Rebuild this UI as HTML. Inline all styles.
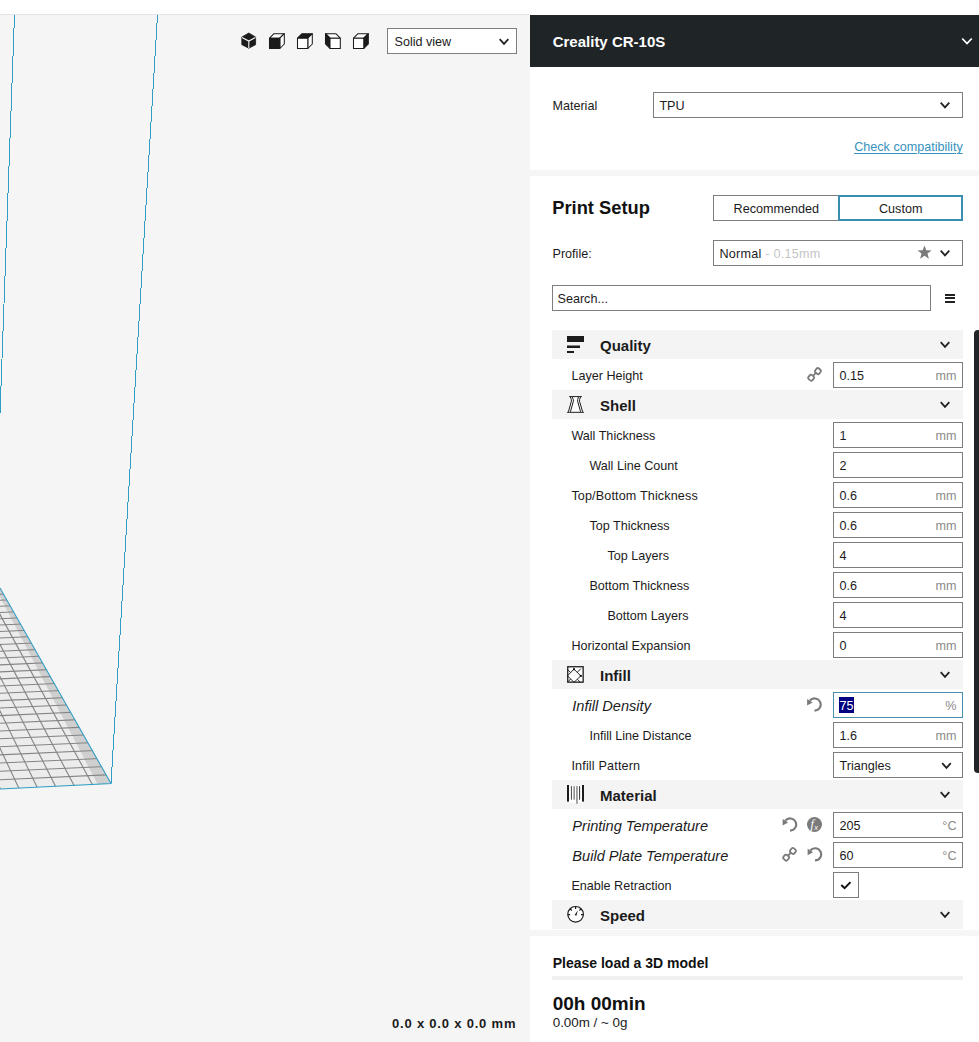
<!DOCTYPE html>
<html><head><meta charset="utf-8">
<style>
*{margin:0;padding:0;box-sizing:border-box}
html,body{width:979px;height:1042px;overflow:hidden;background:#fff}
body{position:relative;font-family:"Liberation Sans",sans-serif;color:#1b1b1b}
.a{position:absolute;display:block;overflow:visible}
.t{position:absolute;white-space:nowrap;line-height:normal}
</style></head><body>
<div class="a" style="left:0px;top:0px;width:979px;height:15px;background:#fff"></div>
<div class="a" style="left:0px;top:14px;width:530px;height:1px;background:#e4e4e4"></div>
<div class="a" style="left:0px;top:15px;width:530px;height:1027px;background:#f5f5f5"></div>
<div class="a" style="left:530px;top:15px;width:449px;height:1027px;background:#f6f6f6"></div>
<div class="a" style="left:530px;top:67px;width:449px;height:103px;background:#fff"></div>
<div class="a" style="left:530px;top:176px;width:449px;height:754px;background:#fff"></div>
<div class="a" style="left:530px;top:936px;width:449px;height:106px;background:#fff"></div>
<svg class="a" style="left:0;top:15px" width="530" height="1027" viewBox="0 15 530 1027"><defs><clipPath id="pc"><polygon points="0,588 111,783.5 0,789"/></clipPath></defs><polygon points="0,588 111,783.5 0,789" fill="#ececec"/><g clip-path="url(#pc)"><polygon points="0,588 111,783.5 97.5,784.2 -3.5,590" fill="#cfcfcf"/><line x1="0" y1="594.20" x2="120" y2="588.70" stroke="#848484" stroke-width="1.1"/><line x1="0" y1="600.20" x2="120" y2="594.70" stroke="#848484" stroke-width="1.1"/><line x1="0" y1="606.29" x2="120" y2="600.79" stroke="#848484" stroke-width="1.1"/><line x1="0" y1="612.45" x2="120" y2="606.95" stroke="#848484" stroke-width="1.1"/><line x1="0" y1="618.70" x2="120" y2="613.20" stroke="#848484" stroke-width="1.1"/><line x1="0" y1="625.03" x2="120" y2="619.53" stroke="#848484" stroke-width="1.1"/><line x1="0" y1="631.45" x2="120" y2="625.95" stroke="#848484" stroke-width="1.1"/><line x1="0" y1="637.96" x2="120" y2="632.46" stroke="#848484" stroke-width="1.1"/><line x1="0" y1="644.55" x2="120" y2="639.05" stroke="#848484" stroke-width="1.1"/><line x1="0" y1="651.24" x2="120" y2="645.74" stroke="#848484" stroke-width="1.1"/><line x1="0" y1="658.01" x2="120" y2="652.51" stroke="#848484" stroke-width="1.1"/><line x1="0" y1="664.87" x2="120" y2="659.37" stroke="#848484" stroke-width="1.1"/><line x1="0" y1="671.83" x2="120" y2="666.33" stroke="#848484" stroke-width="1.1"/><line x1="0" y1="678.88" x2="120" y2="673.38" stroke="#848484" stroke-width="1.1"/><line x1="0" y1="686.03" x2="120" y2="680.53" stroke="#848484" stroke-width="1.1"/><line x1="0" y1="693.27" x2="120" y2="687.77" stroke="#848484" stroke-width="1.1"/><line x1="0" y1="700.61" x2="120" y2="695.11" stroke="#848484" stroke-width="1.1"/><line x1="0" y1="708.05" x2="120" y2="702.55" stroke="#848484" stroke-width="1.1"/><line x1="0" y1="715.59" x2="120" y2="710.09" stroke="#848484" stroke-width="1.1"/><line x1="0" y1="723.23" x2="120" y2="717.73" stroke="#848484" stroke-width="1.1"/><line x1="0" y1="730.97" x2="120" y2="725.47" stroke="#848484" stroke-width="1.1"/><line x1="0" y1="738.82" x2="120" y2="733.32" stroke="#848484" stroke-width="1.1"/><line x1="0" y1="746.78" x2="120" y2="741.28" stroke="#848484" stroke-width="1.1"/><line x1="0" y1="754.84" x2="120" y2="749.34" stroke="#848484" stroke-width="1.1"/><line x1="0" y1="763.01" x2="120" y2="757.51" stroke="#848484" stroke-width="1.1"/><line x1="0" y1="771.29" x2="120" y2="765.79" stroke="#848484" stroke-width="1.1"/><line x1="0" y1="779.69" x2="120" y2="774.19" stroke="#848484" stroke-width="1.1"/><line x1="92.60" y1="784.92" x2="-467.0" y2="-245.0" stroke="#848484" stroke-width="1.1"/><line x1="74.20" y1="785.83" x2="-467.0" y2="-245.0" stroke="#848484" stroke-width="1.1"/><line x1="55.80" y1="786.75" x2="-467.0" y2="-245.0" stroke="#848484" stroke-width="1.1"/><line x1="37.40" y1="787.67" x2="-467.0" y2="-245.0" stroke="#848484" stroke-width="1.1"/><line x1="19.00" y1="788.58" x2="-467.0" y2="-245.0" stroke="#848484" stroke-width="1.1"/><line x1="0.60" y1="789.50" x2="-467.0" y2="-245.0" stroke="#848484" stroke-width="1.1"/><line x1="-17.80" y1="790.42" x2="-467.0" y2="-245.0" stroke="#848484" stroke-width="1.1"/></g><polyline points="0,588 111,783.5 0,789" fill="none" stroke="#2f9dc4" stroke-width="1.1"/><line x1="14.5" y1="15" x2="0" y2="414" stroke="#2f9dc4" stroke-width="1" shape-rendering="crispEdges"/><line x1="157.5" y1="15" x2="111" y2="783.5" stroke="#2f9dc4" stroke-width="1" shape-rendering="crispEdges"/></svg>
<svg class="a" style="left:240px;top:32px" width="18" height="18" viewBox="0 0 18 18"><path d="M8.8 1 L15.6 5.1 V12.7 L8.8 16.2 L1.8 12.7 V5.1 Z" fill="#1b1b1b" stroke="#1b1b1b" stroke-width="0.8" stroke-linejoin="round"/><path d="M2 5.4 L8.8 9.1 L15.4 5.4 M8.8 9.1 V16" stroke="#f5f5f5" stroke-width="1.1" fill="none"/></svg>
<svg class="a" style="left:268px;top:32px" width="18" height="18" viewBox="0 0 18 18"><g stroke="#1b1b1b" stroke-width="1.05" stroke-linejoin="round"><path d="M1.5 6.2 L6.0 1.7000000000000002 H16.3 L11.8 6.2 Z" fill="#fff"/><path d="M11.8 6.2 L16.3 1.7000000000000002 V12.0 L11.8 16.5 Z" fill="#fff"/><path d="M1.5 6.2 h10.3 v10.3 h-10.3 Z" fill="#1b1b1b"/></g></svg>
<svg class="a" style="left:296px;top:32px" width="18" height="18" viewBox="0 0 18 18"><g stroke="#1b1b1b" stroke-width="1.05" stroke-linejoin="round"><path d="M1.5 6.2 L6.0 1.7000000000000002 H16.3 L11.8 6.2 Z" fill="#1b1b1b"/><path d="M11.8 6.2 L16.3 1.7000000000000002 V12.0 L11.8 16.5 Z" fill="#fff"/><path d="M1.5 6.2 h10.3 v10.3 h-10.3 Z" fill="#fff"/></g></svg>
<svg class="a" style="left:324px;top:32px" width="18" height="18" viewBox="0 0 18 18"><g stroke="#1b1b1b" stroke-width="1.05" stroke-linejoin="round"><path d="M6.0 6.2 L1.5 1.7000000000000002 H11.8 L16.3 6.2 Z" fill="#fff"/><path d="M6.0 6.2 L1.5 1.7000000000000002 V12.0 L6.0 16.5 Z" fill="#1b1b1b"/><path d="M6.0 6.2 h10.3 v10.3 h-10.3 Z" fill="#fff"/></g></svg>
<svg class="a" style="left:352px;top:32px" width="18" height="18" viewBox="0 0 18 18"><g stroke="#1b1b1b" stroke-width="1.05" stroke-linejoin="round"><path d="M1.5 6.2 L6.0 1.7000000000000002 H16.3 L11.8 6.2 Z" fill="#fff"/><path d="M11.8 6.2 L16.3 1.7000000000000002 V12.0 L11.8 16.5 Z" fill="#1b1b1b"/><path d="M1.5 6.2 h10.3 v10.3 h-10.3 Z" fill="#fff"/></g></svg>
<div class="a" style="left:387px;top:28px;width:130px;height:26px;background:#fff;border:1px solid #7d7d7d"></div>
<div class="t" style="left:394.5px;top:34.80px;font-size:12.6px;font-weight:normal;font-style:normal;color:#1b1b1b;">Solid view</div>
<svg class="a" style="left:497px;top:37px" width="13.6" height="9.8" viewBox="0 0 13.6 9.8"><polyline points="2.70,2.10 7.00,6.90 11.30,2.10" fill="none" stroke="#222" stroke-width="1.75"/></svg>
<div class="t" style="left:392px;top:1016.24px;font-size:13px;font-weight:bold;font-style:normal;color:#1b1b1b;letter-spacing:0.8px">0.0 x 0.0 x 0.0 mm</div>
<div class="a" style="left:530px;top:15px;width:449px;height:52px;background:#1f2427"></div>
<div class="t" style="left:552.7px;top:33.42px;font-size:15px;font-weight:bold;font-style:normal;color:#fff;">Creality CR-10S</div>
<svg class="a" style="left:960px;top:36px" width="14.5" height="10" viewBox="0 0 14.5 10"><polyline points="2.25,2.50 7.00,7.50 11.75,2.50" fill="none" stroke="#fff" stroke-width="1.8"/></svg>
<div class="t" style="left:552.4px;top:98.60px;font-size:12.6px;font-weight:normal;font-style:normal;color:#1b1b1b;">Material</div>
<div class="a" style="left:653px;top:92px;width:310px;height:26px;background:#fff;border:1px solid #7d7d7d"></div>
<div class="t" style="left:659.4px;top:98.60px;font-size:12.6px;font-weight:normal;font-style:normal;color:#1b1b1b;">TPU</div>
<svg class="a" style="left:938px;top:100px" width="13.6" height="9.8" viewBox="0 0 13.6 9.8"><polyline points="2.70,2.60 7.00,7.40 11.30,2.60" fill="none" stroke="#222" stroke-width="1.75"/></svg>
<div class="t" style="left:854.2px;top:140.00px;font-size:12.6px;font-weight:normal;font-style:normal;color:#3592bd;text-decoration:underline;text-underline-offset:1.5px">Check compatibility</div>
<div class="t" style="left:552.3px;top:197.44px;font-size:18.3px;font-weight:bold;font-style:normal;color:#111;">Print Setup</div>
<div class="a" style="left:713px;top:195px;width:126px;height:26px;background:#fff;border:1px solid #7d7d7d"></div>
<div class="a" style="left:838px;top:195px;width:125px;height:26px;background:#fff;border:2px solid #3b8db0"></div>
<div class="t" style="left:733.6px;top:201.60px;font-size:12.6px;font-weight:normal;font-style:normal;color:#1b1b1b;">Recommended</div>
<div class="t" style="left:879px;top:201.60px;font-size:12.6px;font-weight:normal;font-style:normal;color:#1b1b1b;">Custom</div>
<div class="t" style="left:552.5px;top:246.90px;font-size:12.6px;font-weight:normal;font-style:normal;color:#1b1b1b;">Profile:</div>
<div class="a" style="left:713px;top:240px;width:250px;height:26px;background:#fff;border:1px solid #7d7d7d"></div>
<div class="t" style="left:719.5px;top:246.80px;font-size:12.6px;font-weight:normal;font-style:normal;color:#1b1b1b;letter-spacing:0.25px">Normal<span style="color:#c4c4c4"> - 0.15mm</span></div>
<svg class="a" style="left:917px;top:245px" width="16" height="15" viewBox="0 0 16 15"><path d="M7.5 0.4 L9.3 5.2 L14.6 5.4 L10.5 8.6 L11.9 13.8 L7.5 10.8 L3.1 13.8 L4.5 8.6 L0.4 5.4 L5.7 5.2 Z" fill="#7b7b7b"/></svg>
<svg class="a" style="left:938px;top:248px" width="13.6" height="9.8" viewBox="0 0 13.6 9.8"><polyline points="2.70,2.60 7.00,7.40 11.30,2.60" fill="none" stroke="#222" stroke-width="1.75"/></svg>
<div class="a" style="left:552px;top:285px;width:379px;height:26px;background:#fff;border:1px solid #7d7d7d"></div>
<div class="t" style="left:557.5px;top:291.60px;font-size:12.6px;font-weight:normal;font-style:normal;color:#1b1b1b;">Search...</div>
<div class="a" style="left:945px;top:293.5px;width:10px;height:2px;background:#222"></div>
<div class="a" style="left:945px;top:297px;width:10px;height:2px;background:#222"></div>
<div class="a" style="left:945px;top:300.5px;width:10px;height:2px;background:#222"></div>
<div class="a" style="left:552px;top:330px;width:411px;height:29px;background:#f4f4f4"></div>
<div class="t" style="left:600px;top:337.43px;font-size:15px;font-weight:bold;font-style:normal;color:#1b1b1b;">Quality</div>
<svg class="a" style="left:938px;top:340px" width="13.6" height="9.8" viewBox="0 0 13.6 9.8"><polyline points="2.70,2.10 7.00,6.90 11.30,2.10" fill="none" stroke="#222" stroke-width="1.75"/></svg>
<svg class="a" style="left:567px;top:336px" width="17" height="18" viewBox="0 0 17 18"><rect x="0" y="0" width="17" height="6" fill="#1b1b1b"/><rect x="0" y="9.5" width="13" height="2.5" fill="#1b1b1b"/><rect x="0" y="15" width="7" height="2" fill="#1b1b1b"/></svg>
<div class="t" style="left:571.4px;top:369.10px;font-size:12.6px;font-weight:normal;font-style:normal;color:#1b1b1b;">Layer Height</div>
<div class="a" style="left:833px;top:362px;width:130px;height:26px;background:#fff;border:1px solid #7d7d7d"></div>
<div class="t" style="left:839.5px;top:369.10px;font-size:12.6px;font-weight:normal;font-style:normal;color:#1b1b1b;">0.15</div>
<div class="t" style="right:22.5px;top:369.10px;font-size:12.6px;color:#8a8a8a">mm</div>
<svg class="a" style="left:806px;top:366px" width="16" height="16" viewBox="0 0 16 16"><g transform="translate(0.47 0.37)"><g fill="none" stroke="#7a7a7a" stroke-width="1.8"><rect x="2.08" y="8.78" width="5.2" height="5.2" rx="1.6" transform="rotate(40 4.68 11.38)"/><rect x="8.88" y="2.17" width="5.2" height="5.2" rx="1.6" transform="rotate(40 11.48 4.77)"/><path d="M6.1 9.9 L9.6 6.2"/></g></g></svg>
<div class="a" style="left:552px;top:390px;width:411px;height:29px;background:#f4f4f4"></div>
<div class="t" style="left:600px;top:397.43px;font-size:15px;font-weight:bold;font-style:normal;color:#1b1b1b;">Shell</div>
<svg class="a" style="left:938px;top:400px" width="13.6" height="9.8" viewBox="0 0 13.6 9.8"><polyline points="2.70,2.10 7.00,6.90 11.30,2.10" fill="none" stroke="#222" stroke-width="1.75"/></svg>
<svg class="a" style="left:567px;top:396px" width="17" height="18" viewBox="0 0 17 18"><path d="M3.2 1 H13.8 Q12 4 12.4 5.5 L15.8 16 H1.2 L4.6 5.5 Q5 4 3.2 1 Z" fill="#fff"/><g fill="none" stroke="#1b1b1b" stroke-width="1"><path d="M2.2 0.6 H14.8 M0.1 16.3 H16.9"/><path d="M3.4 1 Q4.7 3.6 4.4 5.2 L1.4 15.8 M5.3 1 Q6.6 3.6 6.4 5.2 L3.4 15.8 M13.5 1 Q12.3 3.6 12.5 5.2 L15.6 15.8 M11.5 1 Q10.4 3.6 10.6 5.2 L13.6 15.8"/></g></svg>
<div class="t" style="left:571.4px;top:429.10px;font-size:12.6px;font-weight:normal;font-style:normal;color:#1b1b1b;">Wall Thickness</div>
<div class="a" style="left:833px;top:422px;width:130px;height:26px;background:#fff;border:1px solid #7d7d7d"></div>
<div class="t" style="left:839.5px;top:429.10px;font-size:12.6px;font-weight:normal;font-style:normal;color:#1b1b1b;">1</div>
<div class="t" style="right:22.5px;top:429.10px;font-size:12.6px;color:#8a8a8a">mm</div>
<div class="t" style="left:589.4px;top:459.10px;font-size:12.6px;font-weight:normal;font-style:normal;color:#1b1b1b;">Wall Line Count</div>
<div class="a" style="left:833px;top:452px;width:130px;height:26px;background:#fff;border:1px solid #7d7d7d"></div>
<div class="t" style="left:839.5px;top:459.10px;font-size:12.6px;font-weight:normal;font-style:normal;color:#1b1b1b;">2</div>
<div class="t" style="left:571.4px;top:489.10px;font-size:12.6px;font-weight:normal;font-style:normal;color:#1b1b1b;letter-spacing:0.14px">Top/Bottom Thickness</div>
<div class="a" style="left:833px;top:482px;width:130px;height:26px;background:#fff;border:1px solid #7d7d7d"></div>
<div class="t" style="left:839.5px;top:489.10px;font-size:12.6px;font-weight:normal;font-style:normal;color:#1b1b1b;">0.6</div>
<div class="t" style="right:22.5px;top:489.10px;font-size:12.6px;color:#8a8a8a">mm</div>
<div class="t" style="left:589.4px;top:519.10px;font-size:12.6px;font-weight:normal;font-style:normal;color:#1b1b1b;">Top Thickness</div>
<div class="a" style="left:833px;top:512px;width:130px;height:26px;background:#fff;border:1px solid #7d7d7d"></div>
<div class="t" style="left:839.5px;top:519.10px;font-size:12.6px;font-weight:normal;font-style:normal;color:#1b1b1b;">0.6</div>
<div class="t" style="right:22.5px;top:519.10px;font-size:12.6px;color:#8a8a8a">mm</div>
<div class="t" style="left:607.4px;top:549.10px;font-size:12.6px;font-weight:normal;font-style:normal;color:#1b1b1b;">Top Layers</div>
<div class="a" style="left:833px;top:542px;width:130px;height:26px;background:#fff;border:1px solid #7d7d7d"></div>
<div class="t" style="left:839.5px;top:549.10px;font-size:12.6px;font-weight:normal;font-style:normal;color:#1b1b1b;">4</div>
<div class="t" style="left:589.4px;top:579.10px;font-size:12.6px;font-weight:normal;font-style:normal;color:#1b1b1b;">Bottom Thickness</div>
<div class="a" style="left:833px;top:572px;width:130px;height:26px;background:#fff;border:1px solid #7d7d7d"></div>
<div class="t" style="left:839.5px;top:579.10px;font-size:12.6px;font-weight:normal;font-style:normal;color:#1b1b1b;">0.6</div>
<div class="t" style="right:22.5px;top:579.10px;font-size:12.6px;color:#8a8a8a">mm</div>
<div class="t" style="left:607.4px;top:609.10px;font-size:12.6px;font-weight:normal;font-style:normal;color:#1b1b1b;">Bottom Layers</div>
<div class="a" style="left:833px;top:602px;width:130px;height:26px;background:#fff;border:1px solid #7d7d7d"></div>
<div class="t" style="left:839.5px;top:609.10px;font-size:12.6px;font-weight:normal;font-style:normal;color:#1b1b1b;">4</div>
<div class="t" style="left:571.4px;top:639.10px;font-size:12.6px;font-weight:normal;font-style:normal;color:#1b1b1b;">Horizontal Expansion</div>
<div class="a" style="left:833px;top:632px;width:130px;height:26px;background:#fff;border:1px solid #7d7d7d"></div>
<div class="t" style="left:839.5px;top:639.10px;font-size:12.6px;font-weight:normal;font-style:normal;color:#1b1b1b;">0</div>
<div class="t" style="right:22.5px;top:639.10px;font-size:12.6px;color:#8a8a8a">mm</div>
<div class="a" style="left:552px;top:660px;width:411px;height:29px;background:#f4f4f4"></div>
<div class="t" style="left:600px;top:667.42px;font-size:15px;font-weight:bold;font-style:normal;color:#1b1b1b;">Infill</div>
<svg class="a" style="left:938px;top:670px" width="13.6" height="9.8" viewBox="0 0 13.6 9.8"><polyline points="2.70,2.10 7.00,6.90 11.30,2.10" fill="none" stroke="#222" stroke-width="1.75"/></svg>
<svg class="a" style="left:567px;top:666px" width="17" height="18" viewBox="0 0 17 18"><rect x="0.75" y="0.75" width="15.4" height="15.4" fill="#fff" stroke="#1b1b1b" stroke-width="1.3"/><g stroke="#1b1b1b" stroke-width="0.95" fill="none"><polygon points="7,3.15 13.8,9.9 7,16.35 0.47,9.8"/><line x1="0.36" y1="3.26" x2="3.69" y2="6.58"/><line x1="10.38" y1="13.28" x2="13.77" y2="16.67"/><line x1="13.88" y1="2.61" x2="10.23" y2="6.37"/><line x1="3.62" y1="12.98" x2="1.22" y2="15.6"/></g><rect x="6" y="2.2" width="2" height="2" fill="#111"/><rect x="12.8" y="8.9" width="2" height="2" fill="#111"/></svg>
<div class="t" style="left:572.3px;top:698.29px;font-size:14.6px;font-weight:normal;font-style:italic;color:#1b1b1b;">Infill Density</div>
<div class="a" style="left:833px;top:692px;width:130px;height:26px;background:#fff;border:1px solid #4a8eab"></div>
<div class="a" style="left:839px;top:697px;width:15px;height:16px;background:#000080"></div>
<div class="t" style="left:839.5px;top:699.10px;font-size:12.6px;font-weight:normal;font-style:normal;color:#fff;">75</div>
<div class="t" style="right:22.5px;top:699.10px;font-size:12.6px;color:#8a8a8a">%</div>
<svg class="a" style="left:806px;top:697px" width="17" height="16" viewBox="0 0 17 16"><g transform="translate(0.00 0.00)"><path d="M3.8 3.7 A6.1 6.1 0 1 1 8.5 13.6" fill="none" stroke="#7a7a7a" stroke-width="2.1"/><path d="M1.1 1.9 L1.1 8.5 L6.6 5.4 Z" fill="#7a7a7a"/></g></svg>
<div class="t" style="left:589.4px;top:729.10px;font-size:12.6px;font-weight:normal;font-style:normal;color:#1b1b1b;">Infill Line Distance</div>
<div class="a" style="left:833px;top:722px;width:130px;height:26px;background:#fff;border:1px solid #7d7d7d"></div>
<div class="t" style="left:839.5px;top:729.10px;font-size:12.6px;font-weight:normal;font-style:normal;color:#1b1b1b;">1.6</div>
<div class="t" style="right:22.5px;top:729.10px;font-size:12.6px;color:#8a8a8a">mm</div>
<div class="t" style="left:571.4px;top:759.10px;font-size:12.6px;font-weight:normal;font-style:normal;color:#1b1b1b;letter-spacing:0.17px">Infill Pattern</div>
<div class="a" style="left:833px;top:752px;width:130px;height:26px;background:#fff;border:1px solid #7d7d7d"></div>
<div class="t" style="left:839.5px;top:759.20px;font-size:12.6px;font-weight:normal;font-style:normal;color:#1b1b1b;">Triangles</div>
<svg class="a" style="left:940px;top:761px" width="13.6" height="9.8" viewBox="0 0 13.6 9.8"><polyline points="2.20,2.10 6.50,6.90 10.80,2.10" fill="none" stroke="#222" stroke-width="1.75"/></svg>
<div class="a" style="left:552px;top:780px;width:411px;height:29px;background:#f4f4f4"></div>
<div class="t" style="left:600px;top:787.42px;font-size:15px;font-weight:bold;font-style:normal;color:#1b1b1b;">Material</div>
<svg class="a" style="left:938px;top:790px" width="13.6" height="9.8" viewBox="0 0 13.6 9.8"><polyline points="2.70,2.10 7.00,6.90 11.30,2.10" fill="none" stroke="#222" stroke-width="1.75"/></svg>
<svg class="a" style="left:567px;top:786px" width="17" height="18" viewBox="0 0 17 18"><rect x="0.5" y="0" width="16" height="16.5" fill="#fff"/><rect x="0" y="-1" width="2" height="16.6" fill="#1b1b1b"/><rect x="3.9" y="0.1" width="1.1" height="13.6" fill="#555"/><rect x="6.4" y="0.1" width="1.5" height="13.6" fill="#888"/><rect x="9.2" y="0.1" width="1.5" height="17.6" fill="#888"/><rect x="12" y="0.1" width="1.1" height="13.6" fill="#444"/><rect x="15" y="-1" width="2" height="16.6" fill="#1b1b1b"/></svg>
<div class="t" style="left:572.3px;top:818.29px;font-size:14.6px;font-weight:normal;font-style:italic;color:#1b1b1b;">Printing Temperature</div>
<div class="a" style="left:833px;top:812px;width:130px;height:26px;background:#fff;border:1px solid #7d7d7d"></div>
<div class="t" style="left:839.5px;top:819.10px;font-size:12.6px;font-weight:normal;font-style:normal;color:#1b1b1b;">205</div>
<div class="t" style="right:22.5px;top:819.10px;font-size:12.6px;color:#8a8a8a">°C</div>
<svg class="a" style="left:781px;top:817px" width="17" height="16" viewBox="0 0 17 16"><g transform="translate(0.50 0.00)"><path d="M3.8 3.7 A6.1 6.1 0 1 1 8.5 13.6" fill="none" stroke="#7a7a7a" stroke-width="2.1"/><path d="M1.1 1.9 L1.1 8.5 L6.6 5.4 Z" fill="#7a7a7a"/></g></svg>
<svg class="a" style="left:807px;top:817px" width="16" height="16" viewBox="0 0 16 16"><circle cx="7.5" cy="7.5" r="7.5" fill="#7a7a7a"/><text x="3.4" y="11.4" font-family="Liberation Serif" font-style="italic" font-size="12.5" fill="#fff">f</text><text x="7.3" y="12.8" font-family="Liberation Sans" font-style="italic" font-size="7.5" fill="#fff">x</text></svg>
<div class="t" style="left:572.3px;top:848.29px;font-size:14.6px;font-weight:normal;font-style:italic;color:#1b1b1b;">Build Plate Temperature</div>
<div class="a" style="left:833px;top:842px;width:130px;height:26px;background:#fff;border:1px solid #7d7d7d"></div>
<div class="t" style="left:839.5px;top:849.10px;font-size:12.6px;font-weight:normal;font-style:normal;color:#1b1b1b;">60</div>
<div class="t" style="right:22.5px;top:849.10px;font-size:12.6px;color:#8a8a8a">°C</div>
<svg class="a" style="left:781px;top:846px" width="16" height="16" viewBox="0 0 16 16"><g transform="translate(0.50 0.20)"><g fill="none" stroke="#7a7a7a" stroke-width="1.8"><rect x="2.08" y="8.78" width="5.2" height="5.2" rx="1.6" transform="rotate(40 4.68 11.38)"/><rect x="8.88" y="2.17" width="5.2" height="5.2" rx="1.6" transform="rotate(40 11.48 4.77)"/><path d="M6.1 9.9 L9.6 6.2"/></g></g></svg>
<svg class="a" style="left:806px;top:846px" width="17" height="16" viewBox="0 0 17 16"><g transform="translate(0.50 0.80)"><path d="M3.8 3.7 A6.1 6.1 0 1 1 8.5 13.6" fill="none" stroke="#7a7a7a" stroke-width="2.1"/><path d="M1.1 1.9 L1.1 8.5 L6.6 5.4 Z" fill="#7a7a7a"/></g></svg>
<div class="t" style="left:571.4px;top:879.10px;font-size:12.6px;font-weight:normal;font-style:normal;color:#1b1b1b;">Enable Retraction</div>
<div class="a" style="left:833px;top:872px;width:26px;height:26px;background:#fff;border:1px solid #7d7d7d"></div>
<svg class="a" style="left:838px;top:877px" width="16" height="16" viewBox="0 0 16 16"><polyline points="3.3,8 6.6,11.2 12.5,5.1" fill="none" stroke="#111" stroke-width="2"/></svg>
<div class="a" style="left:552px;top:900px;width:411px;height:29px;background:#f4f4f4"></div>
<div class="t" style="left:600px;top:907.42px;font-size:15px;font-weight:bold;font-style:normal;color:#1b1b1b;">Speed</div>
<svg class="a" style="left:938px;top:910px" width="13.6" height="9.8" viewBox="0 0 13.6 9.8"><polyline points="2.70,2.10 7.00,6.90 11.30,2.10" fill="none" stroke="#222" stroke-width="1.75"/></svg>
<svg class="a" style="left:567px;top:906px" width="17" height="18" viewBox="0 0 17 18"><g fill="#fff" stroke="#1b1b1b" stroke-width="1.2"><circle cx="8.6" cy="8.3" r="7.8"/></g><g fill="none" stroke="#1b1b1b" stroke-width="1.2"><path d="M8.6 0.6 V3.1 M3.2 2.9 L4.8 4.5 M14 2.9 L12.4 4.5 M0.9 8.6 H3.2 M16.3 8.6 H14"/></g><path d="M7.6 8.9 L10.9 4.3 L9.4 9.7 Z" fill="#1b1b1b"/></svg>
<div class="a" style="left:974px;top:330px;width:8px;height:443px;background:#222527;border-radius:4px"></div>
<div class="t" style="left:552.7px;top:955.33px;font-size:14px;font-weight:bold;font-style:normal;color:#111;">Please load a 3D model</div>
<div class="a" style="left:552px;top:976px;width:411px;height:4px;background:#f0f0f0"></div>
<div class="t" style="left:552.7px;top:992.80px;font-size:19px;font-weight:bold;font-style:normal;color:#111;">00h 00min</div>
<div class="t" style="left:552.7px;top:1015.07px;font-size:13.4px;font-weight:normal;font-style:normal;color:#1b1b1b;">0.00m / ~ 0g</div>
</body></html>
